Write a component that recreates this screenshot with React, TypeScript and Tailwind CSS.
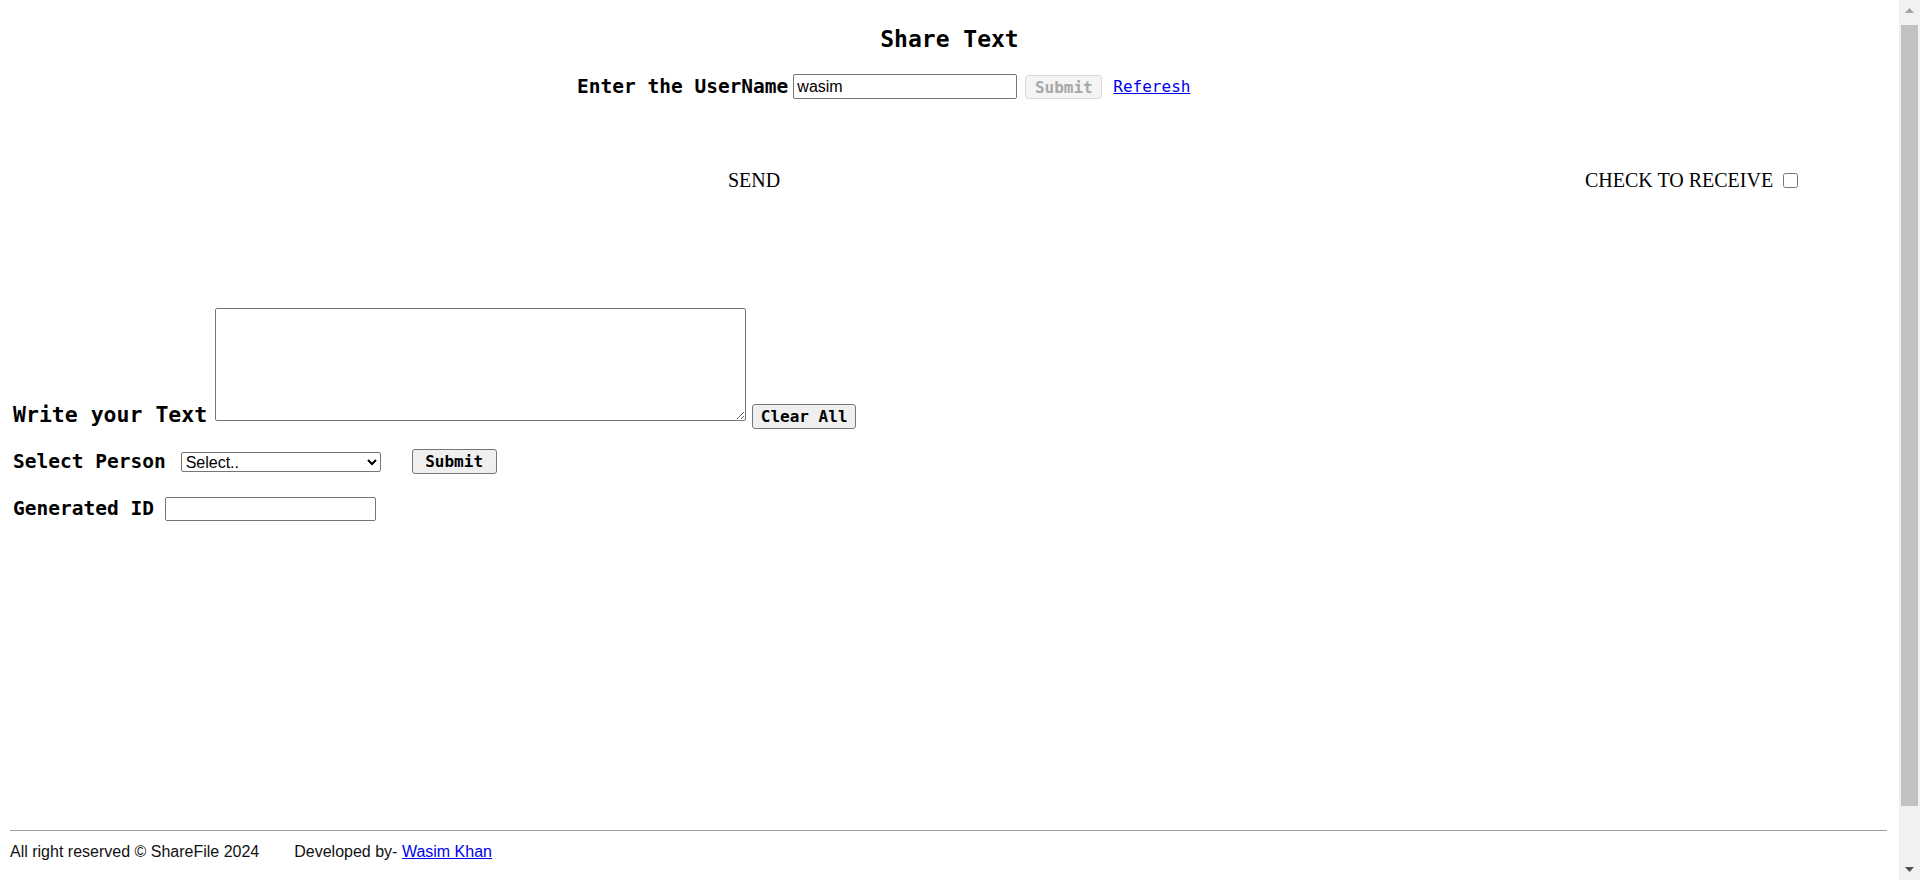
export default function App() {
  const mono = "font-['DejaVu_Sans_Mono',monospace]"

  return (
    <div className="flex h-[880px] items-start overflow-hidden bg-white text-black font-['Liberation_Serif',serif]">
      <main className="min-w-0 flex-1">
        {/* Title */}
        <h2 className={`${mono} pt-[26px] text-center text-[23px] leading-[27px] font-bold`}>Share Text</h2>

        {/* Username */}
        <div className="mt-[21px] flex items-center pl-[577px]">
          <label className={`${mono} text-[19.5px] leading-[22px] font-bold`}>Enter the UserName</label>
          <input
            type="text"
            defaultValue="wasim"
            className="ml-[5px] h-[25px] w-[224px] rounded-[2px] border border-[#767676] px-[3px] font-['Liberation_Sans',Arial,sans-serif] text-[16px] text-black"
          />
          <button
            disabled
            className={`${mono} ml-[8px] h-[24px] w-[77px] rounded-[3px] border border-[#d9d9d9] bg-[#f4f4f4] text-[16px] font-bold text-[#a8a8a8]`}
          >
            Submit
          </button>
          <a href="#" className={`${mono} ml-[11px] text-[16px] text-[#0000ee] underline`}>
            Referesh
          </a>
        </div>

        {/* Send / receive */}
        <div className="mt-[70px] flex items-center text-[20px] leading-[23px]">
          <div className="w-[1508px] text-center">SEND</div>
          <div className="ml-[77px] flex items-center">
            <span>CHECK TO RECEIVE</span>
            <input type="checkbox" className="ml-[10px] h-[15px] w-[15px]" />
          </div>
        </div>

        {/* Text area */}
        <div className="mt-[116px] flex items-end pl-[13px]">
          <label className={`${mono} mb-[2px] text-[21.5px] leading-[25px] font-bold`}>Write your Text</label>
          <textarea className="mb-[8px] ml-[8px] h-[113px] w-[531px] rounded-[2px] border border-[#767676]" />
          <button
            className={`${mono} ml-[6px] h-[25px] w-[104px] rounded-[3px] border border-[#767676] bg-[#efefef] text-[16px] font-bold`}
          >
            Clear All
          </button>
        </div>

        {/* Select person */}
        <div className="mt-[20px] flex h-[25px] items-center pl-[13px]">
          <label className={`${mono} text-[19.5px] leading-[22px] font-bold`}>Select Person</label>
          <select className="ml-[15px] h-[20px] w-[200px] rounded-[2px] border border-[#767676] font-['Liberation_Sans',Arial,sans-serif] text-[16px]">
            <option>Select..</option>
          </select>
          <button
            className={`${mono} ml-[31px] h-[25px] w-[85px] rounded-[3px] border border-[#767676] bg-[#efefef] text-[16px] font-bold`}
          >
            Submit
          </button>
        </div>

        {/* Generated id */}
        <div className="mt-[23px] flex items-center pl-[13px]">
          <label className={`${mono} text-[19.5px] leading-[22px] font-bold`}>Generated ID</label>
          <input
            type="text"
            className="ml-[11px] h-[24px] w-[211px] rounded-[2px] border border-[#767676] px-[3px] font-['Liberation_Sans',Arial,sans-serif] text-[16px]"
          />
        </div>

        {/* Footer */}
        <footer className="mt-[309px] font-['Liberation_Sans',Arial,sans-serif] text-[16px] leading-[18px] text-[#111]">
          <hr className="ml-[10px] mr-[12px] border-t border-[#a0a0a0]" />
          <div className="mt-[12px] flex pl-[10px]">
            <span>All right reserved © ShareFile 2024</span>
            <span className="ml-[35px]">
              Developed by-{' '}
              <a href="#" className="text-[#0000ee] underline">
                Wasim Khan
              </a>
            </span>
          </div>
        </footer>
      </main>

      {/* Window scrollbar */}
      <aside className="flex h-[880px] w-[21px] shrink-0 flex-col items-center bg-[#f1f1f1]">
        <div className="flex h-[21px] w-full items-center justify-center">
          <svg width="9" height="5" viewBox="0 0 9 5">
            <path d="M0 5 L4.5 0 L9 5 Z" fill="#a3a3a3" />
          </svg>
        </div>
        <div className="mt-[4px] h-[781px] w-[17px] bg-[#c1c1c1]" />
        <div className="mt-auto flex h-[21px] w-full items-center justify-center">
          <svg width="9" height="5" viewBox="0 0 9 5">
            <path d="M0 0 L9 0 L4.5 5 Z" fill="#505050" />
          </svg>
        </div>
      </aside>
    </div>
  )
}
